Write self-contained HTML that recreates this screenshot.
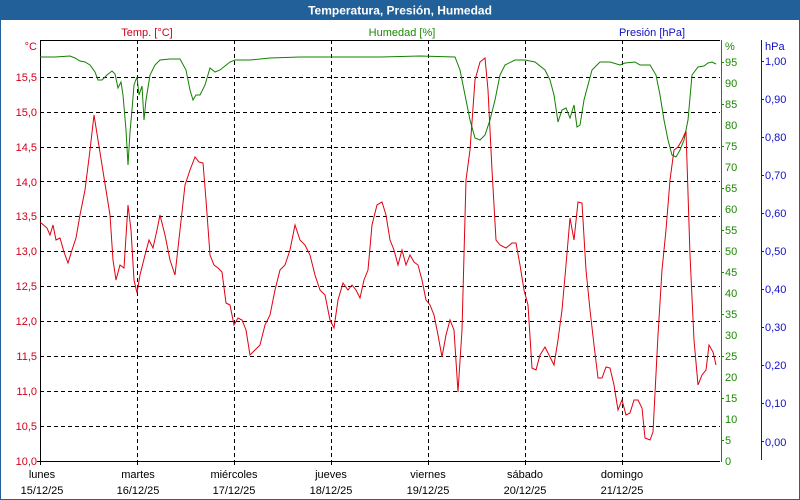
<!DOCTYPE html>
<html><head><meta charset="utf-8"><style>
html,body{margin:0;padding:0;background:#fff;}
svg{display:block;font-family:"Liberation Sans","DejaVu Sans",sans-serif;}
</style></head><body>
<svg width="800" height="500" viewBox="0 0 800 500" xmlns="http://www.w3.org/2000/svg">
<rect x="0" y="0" width="800" height="500" fill="#fff"/>
<rect x="0.5" y="0.5" width="799" height="499" fill="none" stroke="#22609a"/>
<rect x="0" y="0" width="800" height="20" fill="#22609a"/>
<text x="400" y="14.5" fill="#fff" font-size="12" font-weight="bold" text-anchor="middle">Temperatura, Presión, Humedad</text>
<text x="147" y="36" fill="#d0001c" font-size="11" text-anchor="middle">Temp. [°C]</text>
<text x="402" y="36" fill="#1a8a00" font-size="11" text-anchor="middle">Humedad [%]</text>
<text x="652" y="36" fill="#1010c8" font-size="11" text-anchor="middle">Presión [hPa]</text>
<g stroke="#000" stroke-dasharray="4,3" stroke-width="1">
<line x1="40" x2="720" y1="426.5" y2="426.5"/><line x1="40" x2="720" y1="391.5" y2="391.5"/><line x1="40" x2="720" y1="356.5" y2="356.5"/><line x1="40" x2="720" y1="321.5" y2="321.5"/><line x1="40" x2="720" y1="286.5" y2="286.5"/><line x1="40" x2="720" y1="251.5" y2="251.5"/><line x1="40" x2="720" y1="216.5" y2="216.5"/><line x1="40" x2="720" y1="181.5" y2="181.5"/><line x1="40" x2="720" y1="147.5" y2="147.5"/><line x1="40" x2="720" y1="112.5" y2="112.5"/><line x1="40" x2="720" y1="77.5" y2="77.5"/>
<line x1="137.5" x2="137.5" y1="40" y2="461"/><line x1="234.5" x2="234.5" y1="40" y2="461"/><line x1="331.5" x2="331.5" y1="40" y2="461"/><line x1="428.5" x2="428.5" y1="40" y2="461"/><line x1="525.5" x2="525.5" y1="40" y2="461"/><line x1="622.5" x2="622.5" y1="40" y2="461"/>
</g>
<polyline fill="none" stroke="#000" points="40.5,465 40.5,40.5 720,40.5"/>
<line x1="37" x2="720" y1="461.5" y2="461.5" stroke="#000"/>
<g stroke="#000"><line x1="137.5" x2="137.5" y1="461" y2="465"/><line x1="234.5" x2="234.5" y1="461" y2="465"/><line x1="331.5" x2="331.5" y1="461" y2="465"/><line x1="428.5" x2="428.5" y1="461" y2="465"/><line x1="525.5" x2="525.5" y1="461" y2="465"/><line x1="622.5" x2="622.5" y1="461" y2="465"/></g>
<line x1="721.5" x2="721.5" y1="40" y2="462" stroke="#1a8a00"/>
<line x1="761.5" x2="761.5" y1="40" y2="460" stroke="#1010c8"/>
<g fill="#d0001c" font-size="11" text-anchor="end">
<text x="37" y="50">°C</text>
<text x="37" y="81">15,5</text><text x="37" y="116">15,0</text><text x="37" y="151">14,5</text><text x="37" y="186">14,0</text><text x="37" y="220">13,5</text><text x="37" y="255">13,0</text><text x="37" y="290">12,5</text><text x="37" y="325">12,0</text><text x="37" y="360">11,5</text><text x="37" y="395">11,0</text><text x="37" y="430">10,5</text><text x="37" y="465">10,0</text>
</g>
<g fill="#1a8a00" font-size="11">
<text x="725" y="50">%</text>
<text x="725" y="66">95</text><text x="725" y="87">90</text><text x="725" y="108">85</text><text x="725" y="129">80</text><text x="725" y="150">75</text><text x="725" y="171">70</text><text x="725" y="192">65</text><text x="725" y="213">60</text><text x="725" y="234">55</text><text x="725" y="255">50</text><text x="725" y="276">45</text><text x="725" y="297">40</text><text x="725" y="318">35</text><text x="725" y="339">30</text><text x="725" y="360">25</text><text x="725" y="381">20</text><text x="725" y="402">15</text><text x="725" y="423">10</text><text x="725" y="444">5</text><text x="725" y="465">0</text>
</g>
<g stroke="#1a8a00"><line x1="721" x2="724" y1="62.5" y2="62.5"/><line x1="721" x2="724" y1="104.5" y2="104.5"/><line x1="721" x2="724" y1="146.5" y2="146.5"/><line x1="721" x2="724" y1="188.5" y2="188.5"/><line x1="721" x2="724" y1="230.5" y2="230.5"/><line x1="721" x2="724" y1="272.5" y2="272.5"/><line x1="721" x2="724" y1="314.5" y2="314.5"/><line x1="721" x2="724" y1="356.5" y2="356.5"/><line x1="721" x2="724" y1="398.5" y2="398.5"/><line x1="721" x2="724" y1="440.5" y2="440.5"/></g>
<g fill="#1010c8" font-size="11">
<text x="765" y="50">hPa</text>
<text x="765" y="65">1,00</text><text x="765" y="103">0,90</text><text x="765" y="141">0,80</text><text x="765" y="179">0,70</text><text x="765" y="217">0,60</text><text x="765" y="255">0,50</text><text x="765" y="293">0,40</text><text x="765" y="331">0,30</text><text x="765" y="369">0,20</text><text x="765" y="407">0,10</text><text x="765" y="446">0,00</text>
</g>
<g stroke="#1010c8"><line x1="761" x2="764" y1="61.5" y2="61.5"/><line x1="761" x2="764" y1="99.5" y2="99.5"/><line x1="761" x2="764" y1="137.5" y2="137.5"/><line x1="761" x2="764" y1="175.5" y2="175.5"/><line x1="761" x2="764" y1="213.5" y2="213.5"/><line x1="761" x2="764" y1="251.5" y2="251.5"/><line x1="761" x2="764" y1="289.5" y2="289.5"/><line x1="761" x2="764" y1="327.5" y2="327.5"/><line x1="761" x2="764" y1="365.5" y2="365.5"/><line x1="761" x2="764" y1="403.5" y2="403.5"/><line x1="761" x2="764" y1="441.5" y2="441.5"/></g>
<g fill="#000" font-size="11" text-anchor="middle">
<text x="42" y="478">lunes</text><text x="42" y="494">15/12/25</text>
<text x="138" y="478">martes</text><text x="138" y="494">16/12/25</text>
<text x="234" y="478">miércoles</text><text x="234" y="494">17/12/25</text>
<text x="331" y="478">jueves</text><text x="331" y="494">18/12/25</text>
<text x="428" y="478">viernes</text><text x="428" y="494">19/12/25</text>
<text x="525" y="478">sábado</text><text x="525" y="494">20/12/25</text>
<text x="622" y="478">domingo</text><text x="622" y="494">21/12/25</text>
</g>
<polyline fill="none" stroke="#138000" stroke-width="1" points="40,57 48,57 55,57 70,56 75,58 80,61 85,62 90,65 95,72 98,80 102,80 107,75 112,71 115,74 118,88 121,82 123,95 126,130 128,165 130,132 132,110 134,85 137,77 139,95 142,86 144,120 146,100 150,75 155,65 160,60 170,59 180,59 186,70 190,90 193,100 196,95 200,95 205,85 210,68 215,72 220,70 225,66 230,62 235,60 250,60 270,58 300,57 340,57 380,57 420,56 455,57 460,70 465,95 470,120 475,138 480,140 485,135 490,120 495,100 500,75 505,65 515,60 525,60 535,62 545,70 550,80 554,95 558,122 562,110 566,108 570,118 574,105 577,127 580,125 584,100 588,85 592,70 600,62 610,62 620,65 625,63 635,62 640,65 650,65 656,75 660,95 664,120 668,140 672,155 676,157 680,150 684,140 688,120 692,75 698,67 704,66 708,63 712,62 716,64"/>
<polyline fill="none" stroke="#e00010" stroke-width="1" points="40,222 47,228 50,235 53,225 56,240 60,238 64,252 68,263 72,250 76,238 80,215 85,190 90,150 94,115 98,140 102,165 106,190 110,215 113,260 116,280 120,265 124,268 128,205 131,230 134,280 137,293 140,275 145,255 149,240 153,248 157,230 160,215 165,235 170,260 175,275 180,230 185,185 190,170 195,157 199,162 203,163 206,200 210,255 214,265 218,268 222,272 226,303 230,305 234,325 238,318 242,320 246,330 250,355 255,350 260,345 265,325 270,315 275,290 280,270 285,265 290,250 295,225 300,240 305,245 310,255 315,275 320,290 325,295 330,320 334,328 338,300 343,283 348,290 352,285 356,290 360,298 364,280 368,270 372,225 377,205 382,202 386,215 390,240 394,250 398,265 402,250 406,265 410,255 414,262 418,265 422,280 426,300 430,305 434,315 438,335 442,357 446,335 450,320 454,330 458,392 462,330 466,180 470,150 475,80 480,62 485,58 488,90 492,170 496,240 500,245 506,248 512,243 516,243 520,265 524,290 528,305 532,368 536,370 540,355 545,347 549,355 554,365 558,340 562,310 566,265 570,218 574,240 578,202 582,203 586,270 590,310 594,345 598,378 602,378 606,367 610,368 614,385 618,410 622,400 626,415 630,413 634,400 638,400 642,408 645,438 650,440 653,432 658,335 662,270 666,230 670,180 674,150 678,147 682,140 686,131 690,255 694,340 698,385 702,375 706,370 709,345 713,352 716,365"/>
</svg>
</body></html>
